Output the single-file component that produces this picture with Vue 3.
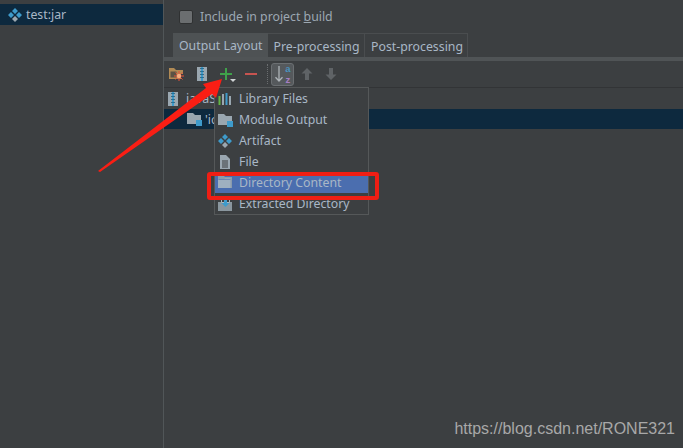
<script setup>
const tabs = [
  { label: 'Output Layout', active: true },
  { label: 'Pre-processing', active: false },
  { label: 'Post-processing', active: false }
]
const menu = [
  { label: 'Library Files', icon: 'lib' },
  { label: 'Module Output', icon: 'mod' },
  { label: 'Artifact', icon: 'art' },
  { label: 'File', icon: 'file' },
  { label: 'Directory Content', icon: 'dir', active: true },
  { label: 'Extracted Directory', icon: 'ext' }
]
</script>

<template>
  <div class="page">
    <aside class="side">
      <div class="side-row">
        <svg width="16" height="16" viewBox="0 0 16 16"><path d="M8 1l3 3-3 3-3-3zM4 5l3 3-3 3-3-3zM12 5l3 3-3 3-3-3z" fill="#3e9bcb"/><path d="M8 9l3 3-3 3-3-3z" fill="#9aa7b0"/></svg>
        <span>test:jar</span>
      </div>
    </aside>
    <main class="main">
      <label class="check-row">
        <span class="box"></span>
        <span>Include in project <u>b</u>uild</span>
      </label>
      <div class="tabs">
        <div v-for="t in tabs" :key="t.label" class="tab" :class="{ on: t.active }">{{ t.label }}</div>
      </div>
      <div class="band"></div>
      <div class="toolbar">
        <svg width="16" height="16" viewBox="0 0 16 16"><path d="M1 2h5l2 2h7v4H13v5H1z" fill="#b08a55"/><path d="M2.500 5.500h6v6h-6z" fill="#5b5345"/><path d="M11 5v10M6 10h10M7.500 6.500l7 7M14.500 6.500l-7 7" stroke="#e8503a"/><circle cx="11" cy="10" r="2.200" fill="#f5b080"/></svg>
        <svg class="t2" width="16" height="16" viewBox="0 0 16 16"><path d="M3 1h10v14H3z" fill="#9aa7b0"/><path d="M7 1h2v14H7z" fill="#3e9bcb"/><path d="M6 2.500h4M6 5.500h4M6 8.500h4M6 11.500h4" stroke="#2a6f92"/></svg>
        <span class="plus-wrap">
          <svg width="14" height="14" viewBox="0 0 14 14"><path d="M7 1v12M1 7h12" stroke="#3fa14a" stroke-width="2"/></svg>
          <i class="drop"></i>
        </span>
        <svg class="t4" width="14" height="14" viewBox="0 0 14 14"><path d="M1 7h12" stroke="#c75450" stroke-width="2"/></svg>
        <span class="sep"></span>
        <span class="sort">
          <svg width="10" height="20" viewBox="0 0 10 20"><path d="M5 2v15M1.500 13.300L5 17l3.500-3.700" stroke="#aeb4b8" stroke-width="1.300" fill="none"/></svg>
          <span class="az">
            <span class="a">a</span>
            <span class="z">z</span>
          </span>
        </span>
        <svg class="t6" width="14" height="14" viewBox="0 0 14 14"><path d="M7 1l5.500 5.500H9V13H5V6.500H1.500z" fill="#5f6366"/></svg>
        <svg class="t7" width="14" height="14" viewBox="0 0 14 14"><path d="M7 13l5.500-5.500H9V1H5v6.500H1.500z" fill="#5f6366"/></svg>
      </div>
      <div class="tree">
        <div class="row">
          <svg width="16" height="16" viewBox="0 0 16 16"><path d="M3 1h10v14H3z" fill="#9aa7b0"/><path d="M7 1h2v14H7z" fill="#3e9bcb"/><path d="M6 2.500h4M6 5.500h4M6 8.500h4M6 11.500h4" stroke="#2a6f92"/></svg>
          <span>javaSp</span>
        </div>
        <div class="row sel">
          <svg width="16" height="16" viewBox="0 0 16 16"><path d="M1 2h6l2 2h6v9H1z" fill="#9aa7b0"/><path d="M10 9h6v6h-6z" fill="#3e9bcb"/></svg>
          <span>'ic</span>
        </div>
      </div>

      <div class="menu">
        <div v-for="m in menu" :key="m.label" class="item" :class="{ on: m.active }">
          <svg width="16" height="16" viewBox="0 0 16 16">
            <template v-if="m.icon === 'lib'">
              <path d="M1.500 5h2v9h-2z" fill="#62b543"/><path d="M5 3h2v11H5z" fill="#9aa7b0"/><path d="M8.500 2h2v12h-2z" fill="#3e9bcb"/><path d="M12 5h2v9h-2z" fill="#9aa7b0"/>
            </template>
            <template v-else-if="m.icon === 'mod'">
              <path d="M1 2h6l2 2h6v9H1z" fill="#9aa7b0"/><path d="M10 9h6v6h-6z" fill="#3e9bcb"/>
            </template>
            <template v-else-if="m.icon === 'art'">
              <path d="M8 1l3 3-3 3-3-3zM4 5l3 3-3 3-3-3zM12 5l3 3-3 3-3-3z" fill="#3e9bcb"/><path d="M8 9l3 3-3 3-3-3z" fill="#9aa7b0"/>
            </template>
            <template v-else-if="m.icon === 'file'">
              <path d="M3 1h6l4 4v10H3z" fill="#9aa7b0"/><path d="M5 7h6M5 9h6M5 11h6M5 13h6" stroke="#3c3f41"/>
            </template>
            <template v-else-if="m.icon === 'dir'">
              <path d="M1 1h6l1 1h7v11H1z" fill="#8a9bad"/><path d="M1 4.500h6l1-1h5.500V13H1z" fill="#9fb0c0"/><path d="M1.500 4.500h12" stroke="#4b6eaf" stroke-width=".6"/>
            </template>
            <template v-else>
              <path d="M1 6h14v9H1z" fill="#8a969e"/><path d="M4.500 .5h8v6h-8z" fill="#3c3f41" stroke="#aeb9c0"/><path d="M7 4h3v3h2.500L8.500 11 4.500 7H7z" fill="#3e9bcb"/>
            </template>
          </svg>
          <span>{{ m.label }}</span>
        </div>
      </div>
    </main>

    <div class="highlight"></div>
    <svg class="arrow" width="683" height="448" viewBox="0 0 683 448">
      <path d="M98 171L206 88L203 84L222 79L216 98L212 94L100 172z" fill="#fa1e14"/>
    </svg>
    <div class="mark">https://blog.csdn.net/RONE321</div>
  </div>
</template>

<style>
html, body { margin: 0; background: #3c3f41; }
</style>

<style scoped>
.page {
  position: relative;
  display: flex;
  width: 683px;
  height: 448px;
  overflow: hidden;
  background: #3c3f41;
  color: #a9b7c6;
  font-family: "Noto Sans", sans-serif;
  font-size: 12.300px;
}
.side {
  width: 164px;
  flex: none;
  padding-top: 4px;
  box-sizing: border-box;
  border-right: 1px solid #515658;
}
.side-row {
  display: flex;
  align-items: center;
  gap: 3px;
  height: 21px;
  padding-left: 7px;
  background: #0d293e;
}
.main {
  position: relative;
  flex: 1;
  display: flex;
  flex-direction: column;
  min-width: 0;
}
.check-row {
  display: flex;
  align-items: center;
  gap: 7px;
  height: 33px;
  padding-left: 15px;
  box-sizing: border-box;
  color: #9da8b3;
}
.box {
  width: 14px;
  height: 14px;
  box-sizing: border-box;
  border-radius: 2px;
  background: #6b6e70;
  border: 1px solid #2f3132;
}
.tabs {
  display: flex;
  height: 24px;
  margin-left: 9px;
}
.tab {
  padding: 0 4.500px 0 6px;
  line-height: 26px;
  height: 24px;
  box-sizing: border-box;
  border: 1px solid #4a4d4f;
  border-left: 0;
  border-bottom: 0;
  color: #a9b7c6;
  white-space: nowrap;
}
.tab.on {
  background: #4e5254;
  border: 0;
  padding: 0 5px 0 6px;
}
.band {
  height: 4px;
  background: #505456;
}
.toolbar {
  display: flex;
  align-items: center;
  height: 26px;
  padding-left: 4px;
  border-bottom: 1px solid #323436;
}
.t2 { margin-left: 10px; }
.plus-wrap { position: relative; display: block; width: 14px; height: 14px; margin-left: 9px; }
.plus-wrap svg { display: block; }
.drop {
  position: absolute;
  left: 11px;
  top: 12px;
  border: 3px solid transparent;
  border-top: 3px solid #d0d4d6;
  border-bottom: 0;
}
.t4 { margin-left: 11px; }
.sep { width: 0; height: 20px; margin-left: 9px; border-left: 1px dotted #6a6d6f; }
.sort {
  display: flex;
  align-items: center;
  justify-content: center;
  gap: 1px;
  width: 23px;
  height: 23px;
  margin-left: 3px;
  box-sizing: border-box;
  background: #55595c;
  border: 1px solid #6b6f72;
  border-radius: 3px;
}
.az {
  display: flex;
  flex-direction: column;
  align-items: center;
  font-family: "Liberation Sans", sans-serif;
  font-size: 9.500px;
  font-weight: 700;
  line-height: 11px;
}
.az .a { color: #4a93bf; }
.az .z { color: #a87ec4; }
.t6 { margin-left: 6px; }
.t7 { margin-left: 10px; }
.tree { flex: 1; }
.row {
  display: flex;
  align-items: center;
  gap: 5px;
  height: 21px;
  padding-left: 1px;
  white-space: nowrap;
}
.row.sel {
  background: #0d293e;
  gap: 3px;
  padding-left: 22px;
  height: 20px;
  color: #a9b7c6;
}
.menu {
  position: absolute;
  left: 50px;
  top: 87px;
  width: 155px;
  height: 128px;
  box-sizing: border-box;
  background: #3c3f41;
  border: 1px solid #555859;
}
.item {
  display: flex;
  align-items: center;
  gap: 6px;
  height: 21px;
  padding-left: 2px;
  color: #a9b7c6;
  white-space: nowrap;
}
.item.on { background: #4b6eaf; }
.highlight {
  position: absolute;
  left: 207px;
  top: 172px;
  width: 172px;
  height: 28px;
  box-sizing: border-box;
  border: 4px solid #f01e14;
  border-radius: 3px;
}
.arrow { position: absolute; left: 0; top: 0; pointer-events: none; }
.mark {
  position: absolute;
  right: 8px;
  top: 420px;
  font-family: "Liberation Sans", sans-serif;
  font-size: 16px;
  color: #a8a8a8;
  white-space: nowrap;
}
</style>
